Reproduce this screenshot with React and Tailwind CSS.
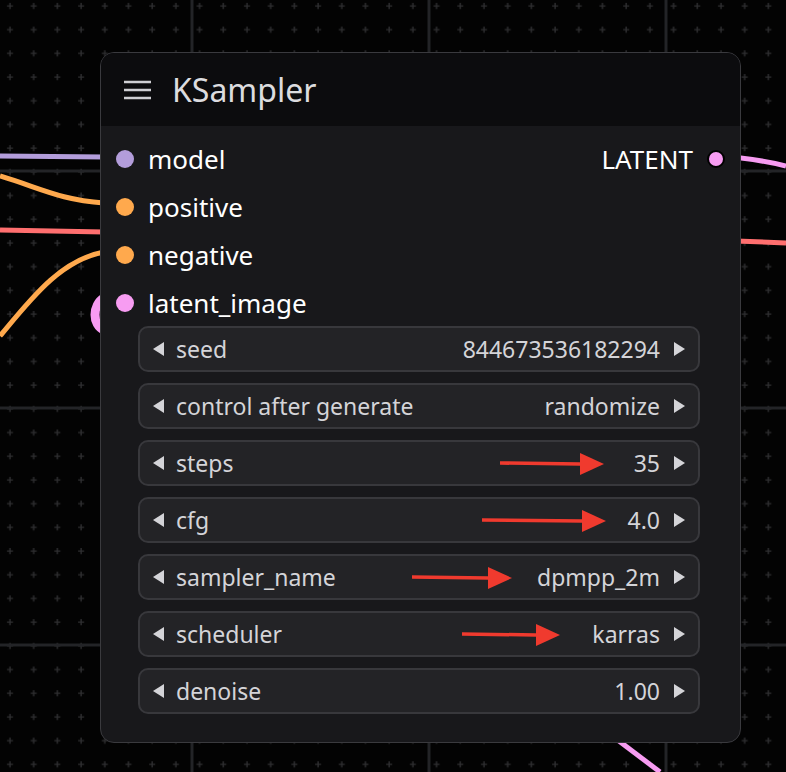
import React from "react";

const inputs = [
  { name: "model", color: "bg-[#b39ddb]" },
  { name: "positive", color: "bg-[#ffa94d]" },
  { name: "negative", color: "bg-[#ffa94d]" },
  { name: "latent_image", color: "bg-[#f79cf2]" },
];

const widgets = [
  ["seed", "844673536182294"],
  ["control after generate", "randomize"],
  ["steps", "35"],
  ["cfg", "4.0"],
  ["sampler_name", "dpmpp_2m"],
  ["scheduler", "karras"],
  ["denoise", "1.00"],
];

// arrows drawn over the widgets (x1, x2 relative to the widget)
const arrows = { 2: [360, 464], 3: [342, 466], 4: [272, 372], 5: [322, 420] };

const Canvas = () => (
  <svg className="absolute inset-0" width="786" height="772">
    <defs>
      <pattern id="dots" width="23.7" height="23.7" patternUnits="userSpaceOnUse" x="-2" y="-6">
        <path d="M12 9v6M9 12h6" stroke="#2e2e30" strokeWidth="1.4" />
      </pattern>
    </defs>
    <rect width="786" height="772" fill="#030303" />
    <rect width="786" height="772" fill="url(#dots)" />
    {[192, 429, 666].map((x) => (
      <line key={x} x1={x} y1="0" x2={x} y2="772" stroke="#232427" strokeWidth="3" />
    ))}
    {[171, 408, 645].map((y) => (
      <line key={y} x1="0" y1={y} x2="786" y2={y} stroke="#232427" strokeWidth="3" />
    ))}
    <path d="M0 156 L104 157" stroke="#b39ddb" strokeWidth="5" fill="none" />
    <path d="M0 176 C40 188 60 200 104 203" stroke="#ffa94d" strokeWidth="5" fill="none" />
    <path d="M0 230 L104 232" stroke="#ff6f6f" strokeWidth="5" fill="none" />
    <path d="M0 336 C30 300 60 260 104 252" stroke="#ffa94d" strokeWidth="5" fill="none" />
    <path d="M104 298 C92 305 92 325 104 330" stroke="#f79cf2" strokeWidth="9" fill="none" />
    <path d="M716 156 C750 158 770 162 786 166" stroke="#f79cf2" strokeWidth="5" fill="none" />
    <path d="M736 241 L786 243" stroke="#ff6f6f" strokeWidth="5" fill="none" />
    <path d="M615 738 L660 772" stroke="#f79cf2" strokeWidth="5" fill="none" />
  </svg>
);

const Tri = ({ left }) => (
  <svg width="13" height="16" viewBox="0 0 13 16">
    <path d={left ? "M12 1 L1 8 L12 15Z" : "M1 1 L12 8 L1 15Z"} fill="#d4d4d8" />
  </svg>
);

export default function App() {
  return (
    <div className="relative w-[786px] h-[772px] overflow-hidden bg-black font-['Inter',sans-serif]">
      <Canvas />
      <div className="absolute left-[100px] top-[52px] w-[641px] h-[691px] rounded-[14px] border border-[#3a3a3e] bg-[#18181b] overflow-hidden flex flex-col">
        <div className="h-[73px] bg-[#0c0c0e] flex items-center gap-[21px] pl-[23px] shrink-0">
          <svg width="27" height="20" viewBox="0 0 27 20">
            <path d="M0 2h27M0 10h27M0 18h27" stroke="#cfcfd3" strokeWidth="2.4" />
          </svg>
          <span className="text-[32px] text-[#dcdcdf] leading-none">KSampler</span>
        </div>
        <div className="flex flex-col pt-[9px]">
          {inputs.map((inp, i) => (
            <div key={inp.name} className="h-[48px] flex items-center pl-[15px] pr-[15px]">
              <span className={`w-[18px] h-[18px] rounded-full ${inp.color}`} />
              <span className="ml-[14px] text-[26px] text-white leading-none">{inp.name}</span>
              {i === 0 && (
                <>
                  <span className="ml-auto text-[26px] text-white leading-none">LATENT</span>
                  <span className="ml-[14px] w-[18px] h-[18px] rounded-full bg-[#f79cf2] border-2 border-black" />
                </>
              )}
            </div>
          ))}
        </div>
        <div className="flex flex-col gap-[11px] pl-[37px] pr-[40px] -mt-[1px]">
          {widgets.map(([label, value], i) => (
            <div
              key={label}
              className="relative h-[46px] rounded-[10px] border-2 border-[#38383c] bg-[#232326] flex items-center px-[12px] text-[23px] text-[#d4d4d8] leading-none"
            >
              <Tri left />
              <span className="ml-[11px]">{label}</span>
              <span className="ml-auto mr-[13px]">{value}</span>
              <Tri />
              {arrows[i] && (
                <svg className="absolute left-0 top-0" width="562" height="46">
                  <path d={`M${arrows[i][0]} 21 L${arrows[i][1] - 24} 22`} stroke="#f03a2e" strokeWidth="3.5" />
                  <path d={`M${arrows[i][1] - 24} 11 L${arrows[i][1]} 22 L${arrows[i][1] - 24} 33Z`} fill="#f03a2e" />
                </svg>
              )}
            </div>
          ))}
        </div>
      </div>
    </div>
  );
}
